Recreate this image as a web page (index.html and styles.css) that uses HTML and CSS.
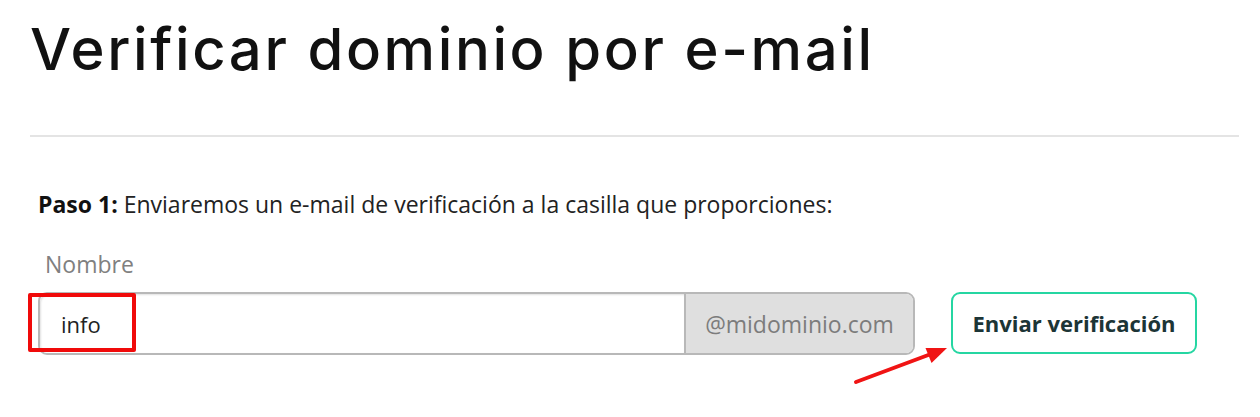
FILE: index.html
```html
<!DOCTYPE html>
<html lang="es">
<head>
<meta charset="utf-8">
<title>Verificar dominio por e-mail</title>
<link rel="stylesheet" href="styles.css">
</head>
<body>
<div class="page">
  <h1 class="title">Verificar dominio por e-mail</h1>
  <hr class="divider">
  <section class="step">
    <p class="step-text"><strong>Paso 1:</strong> Enviaremos un e-mail de verificación a la casilla que proporciones:</p>
    <label class="field-label" for="nombre">Nombre</label>
    <div class="form-row">
      <div class="input-group">
        <div class="input-main">
          <span class="input-value" id="nombre">info</span>
          <span class="highlight"></span>
        </div>
        <div class="addon">@midominio.com</div>
      </div>
      <button class="btn" type="button">Enviar verificación</button>
      <svg class="arrow" width="104" height="50" viewBox="0 0 104 50">
        <path d="M6 43 L81 15" fill="none" stroke="#f01414" stroke-width="4" stroke-linecap="round"></path>
        <path d="M97 9 L75.5 9 L81.5 24 Z" fill="#f01414"></path>
      </svg>
    </div>
  </section>
</div>
</body>
</html>
```

FILE: styles.css
```css
html, body {
  margin: 0;
  padding: 0;
  background: #ffffff;
}

.page {
  min-height: 417px;
  box-sizing: border-box;
  padding: 0 21px 40px 30px;
  font-family: "Open Sans", "Noto Sans", sans-serif;
  color: #222222;
}

.title {
  margin: 0;
  padding-top: 14px;
  font-family: Inter, "Noto Sans", sans-serif;
  font-weight: 500;
  font-size: 58px;
  line-height: 70px;
  color: #111111;
  letter-spacing: 2.6px;
}

.divider {
  margin: 51px 0 0 0;
  border: 0;
  height: 2px;
  background: #e4e4e4;
}

.step {
  padding-left: 8px;
}

.step-text {
  margin: 0;
  padding-top: 51px;
  font-size: 23px;
  line-height: 32px;
  color: #222222;
}

.step-text strong {
  font-weight: 700;
  color: #111111;
}

.field-label {
  display: block;
  margin-top: 28px;
  padding-left: 7px;
  font-size: 23px;
  line-height: 32px;
  color: #808080;
}

.form-row {
  position: relative;
  display: flex;
  align-items: flex-start;
  gap: 36px;
  margin-top: 12px;
  padding-bottom: 40px;
}

.input-group {
  display: flex;
  width: 877px;
  height: 63px;
  box-sizing: border-box;
  border: 2px solid #b8b8b8;
  border-radius: 9px;
}

.input-main {
  position: relative;
  flex: 1;
  display: flex;
  align-items: center;
  padding-left: 21px;
  background: #ffffff;
  border-radius: 8px 0 0 8px;
  box-shadow: inset 1px 1px 2px rgba(0, 0, 0, 0.12);
}

.input-value {
  font-size: 22px;
  color: #222222;
}

.highlight {
  position: absolute;
  left: -12px;
  top: -1px;
  width: 108px;
  height: 59px;
  box-sizing: border-box;
  border: 4px solid #f00a0a;
  border-radius: 2px;
}

.addon {
  display: flex;
  align-items: center;
  justify-content: center;
  width: 227px;
  border-left: 2px solid #b8b8b8;
  background: #dfdfdf;
  border-radius: 0 7px 7px 0;
  font-size: 23px;
  color: #7c7c7c;
}

.btn {
  width: 246px;
  height: 62px;
  box-sizing: border-box;
  border: 2px solid #25d6a2;
  border-radius: 9px;
  background: #ffffff;
  font-family: "Open Sans", "Noto Sans", sans-serif;
  font-weight: 700;
  font-size: 22px;
  color: #1c3536;
  padding: 0;
  cursor: pointer;
}

.arrow {
  position: absolute;
  left: 812px;
  top: 47px;
  overflow: visible;
}
```
